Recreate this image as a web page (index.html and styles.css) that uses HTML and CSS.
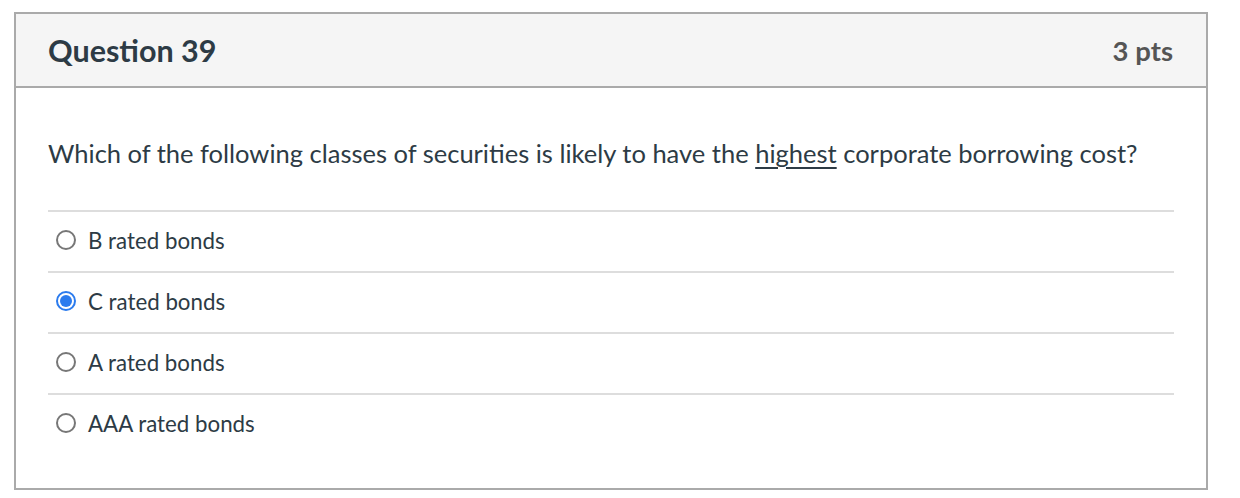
FILE: index.html
```html
<!DOCTYPE html>
<html>
<head>
<meta charset="utf-8">
<link rel="stylesheet" href="styles.css">
</head>
<body>
<div class="question">
  <div class="q-header">
    <h2 class="q-title">Question 39</h2>
    <span class="q-points">3 pts</span>
  </div>
  <div class="q-body">
    <p class="q-text">Which of the following classes of securities is likely to have the <u>highest</u> corporate borrowing cost?</p>
    <div class="answers">
      <label class="answer"><span class="radio"></span><span class="label">B rated bonds</span></label>
      <label class="answer"><span class="radio checked"></span><span class="label">C rated bonds</span></label>
      <label class="answer"><span class="radio"></span><span class="label">A rated bonds</span></label>
      <label class="answer"><span class="radio"></span><span class="label">AAA rated bonds</span></label>
    </div>
  </div>
</div>
</body>
</html>
```

FILE: styles.css
```css
html, body {
  margin: 0;
  padding: 0;
  background: #ffffff;
}
body {
  font-family: Lato, "Open Sans", sans-serif;
  color: #2d3b45;
}
.question {
  margin: 12px 0 0 14px;
  width: 1194px;
  box-sizing: border-box;
  border: 2px solid #aaaaaa;
}
.q-header {
  height: 72px;
  background: #f5f5f5;
  border-bottom: 2px solid #aaaaaa;
  display: flex;
  align-items: center;
  justify-content: space-between;
  padding: 0 33px 0 32px;
}
.q-title {
  margin: 0;
  font-size: 30.5px;
  font-weight: 700;
  color: #2d3b45;
}
.q-points {
  font-size: 27.5px;
  font-weight: 700;
  color: #555555;
}
.q-body {
  padding: 48px 32px 34px 32px;
}
.q-text {
  margin: 0 0 40px 0;
  font-size: 25.5px;
  line-height: 34px;
}
.q-text u {
  text-decoration-thickness: 2px;
  text-underline-offset: 4px;
}
.answers {
  display: flex;
  flex-direction: column;
}
.answer {
  display: flex;
  align-items: center;
  height: 59px;
  box-sizing: content-box;
  border-top: 2px solid #dddddd;
  padding-left: 8px;
  gap: 12px;
}
.answer .radio,
.answer .label {
  margin-bottom: 3px;
}
.radio {
  width: 16px;
  height: 16px;
  border: 2px solid #777777;
  border-radius: 50%;
  box-sizing: content-box;
  position: relative;
}
.radio.checked {
  border-color: #2b7bee;
}
.radio.checked::after {
  content: "";
  position: absolute;
  left: 2px;
  top: 2px;
  width: 12px;
  height: 12px;
  border-radius: 50%;
  background: #2b7bee;
}
.label {
  font-size: 22.3px;
  color: #2d3b45;
}
```
